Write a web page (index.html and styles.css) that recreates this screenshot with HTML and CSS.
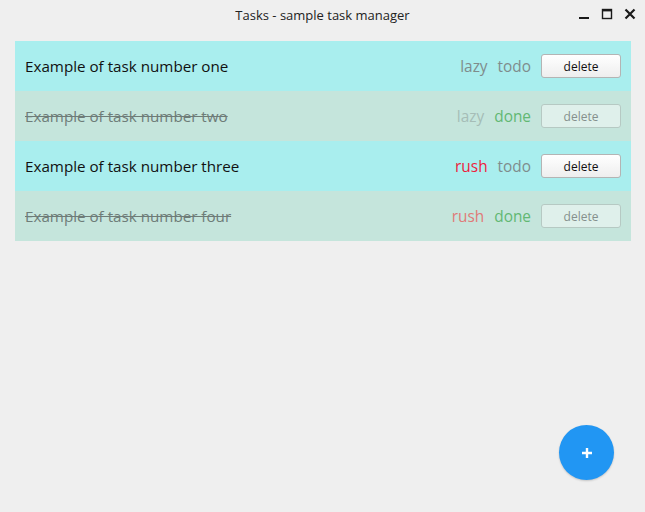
FILE: index.html
```html
<!DOCTYPE html>
<html>
<head>
<meta charset="utf-8">
<link rel="stylesheet" href="styles.css">
</head>
<body>
<div class="window">
  <header class="titlebar">
    <div class="title">Tasks - sample task manager</div>
    <div class="controls">
      <svg class="ctl" width="12" height="12" viewBox="0 0 12 12"><rect x="1" y="9" width="10" height="2" fill="#1a1a1a"/></svg>
      <svg class="ctl" width="12" height="12" viewBox="0 0 12 12"><rect x="1.5" y="1.5" width="9" height="9" fill="none" stroke="#1a1a1a" stroke-width="1.4"/><rect x="1" y="1" width="10" height="2.4" fill="#1a1a1a"/></svg>
      <svg class="ctl" width="12" height="12" viewBox="0 0 12 12"><path d="M1.5 1.5 L10.5 10.5 M10.5 1.5 L1.5 10.5" stroke="#1a1a1a" stroke-width="2.2"/></svg>
    </div>
  </header>
  <main class="content">
    <ul class="tasks">
      <li class="task">
        <span class="name">Example of task number one</span>
        <span class="tag lazy">lazy</span>
        <span class="tag todo">todo</span>
        <button class="del">delete</button>
      </li>
      <li class="task done">
        <span class="name">Example of task number two</span>
        <span class="tag lazy">lazy</span>
        <span class="tag state-done">done</span>
        <button class="del">delete</button>
      </li>
      <li class="task">
        <span class="name">Example of task number three</span>
        <span class="tag rush">rush</span>
        <span class="tag todo">todo</span>
        <button class="del">delete</button>
      </li>
      <li class="task done">
        <span class="name">Example of task number four</span>
        <span class="tag rush">rush</span>
        <span class="tag state-done">done</span>
        <button class="del">delete</button>
      </li>
    </ul>
    <div class="fab-row">
      <button class="fab">
        <svg width="12" height="12" viewBox="0 0 12 12"><path d="M6 1 V11 M1 6 H11" stroke="#fff" stroke-width="2.4"/></svg>
      </button>
    </div>
  </main>
</div>
</body>
</html>
```
FILE: styles.css
```css
* { box-sizing: border-box; }
html, body { margin: 0; padding: 0; }
body {
  background: #efefef;
  font-family: "Open Sans", "Noto Sans", sans-serif;
  width: 645px;
  height: 512px;
  overflow: hidden;
}
.window {
  display: flex;
  flex-direction: column;
  height: 512px;
}
.titlebar {
  height: 29px;
  display: flex;
  align-items: center;
  justify-content: center;
  position: relative;
}
.title {
  font-size: 13px;
  color: #222;
  padding-top: 1px;
}
.controls {
  position: absolute;
  right: 9px;
  top: 8px;
  display: flex;
  gap: 11px;
}
.ctl { display: block; }
.content {
  flex: 1;
  display: flex;
  flex-direction: column;
  padding: 12px 14px 32px 15px;
}
.tasks {
  list-style: none;
  margin: 0;
  padding: 0;
}
.task {
  height: 50px;
  display: flex;
  align-items: center;
  padding: 0 10px;
  background: #a9eeee;
  gap: 10px;
}
.task.done { background: #c5e5dc; }
.name {
  flex: 1;
  font-size: 15.2px;
  color: #111;
}
.done .name {
  color: #6e7c78;
  text-decoration: line-through;
}
.tag {
  font-size: 15.4px;
}
.lazy, .todo { color: #7f8c8c; }
.done .lazy { color: #a6bdb7; }
.rush { color: #ee1c3c; }
.done .rush { color: #e07a78; }
.state-done { color: #62b873; }
.del {
  width: 80px;
  height: 24px;
  border: 1px solid #b4b4b4;
  border-radius: 3px;
  background: linear-gradient(#ffffff, #eeeeee);
  font-family: "Open Sans", "Noto Sans", sans-serif;
  font-size: 12px;
  font-weight: 500;
  color: #111;
  padding: 0;
}
.done .del {
  background: #dff0eb;
  border-color: #b6c9c3;
  color: #85908d;
}
.fab-row {
  margin-top: auto;
  display: flex;
  justify-content: flex-end;
  padding-right: 17px;
}
.fab {
  width: 55px;
  height: 55px;
  border-radius: 50%;
  border: none;
  background: #2196f3;
  box-shadow: 0 1px 2px rgba(0,0,0,0.18);
  display: flex;
  align-items: center;
  justify-content: center;
  padding: 0;
}
```
